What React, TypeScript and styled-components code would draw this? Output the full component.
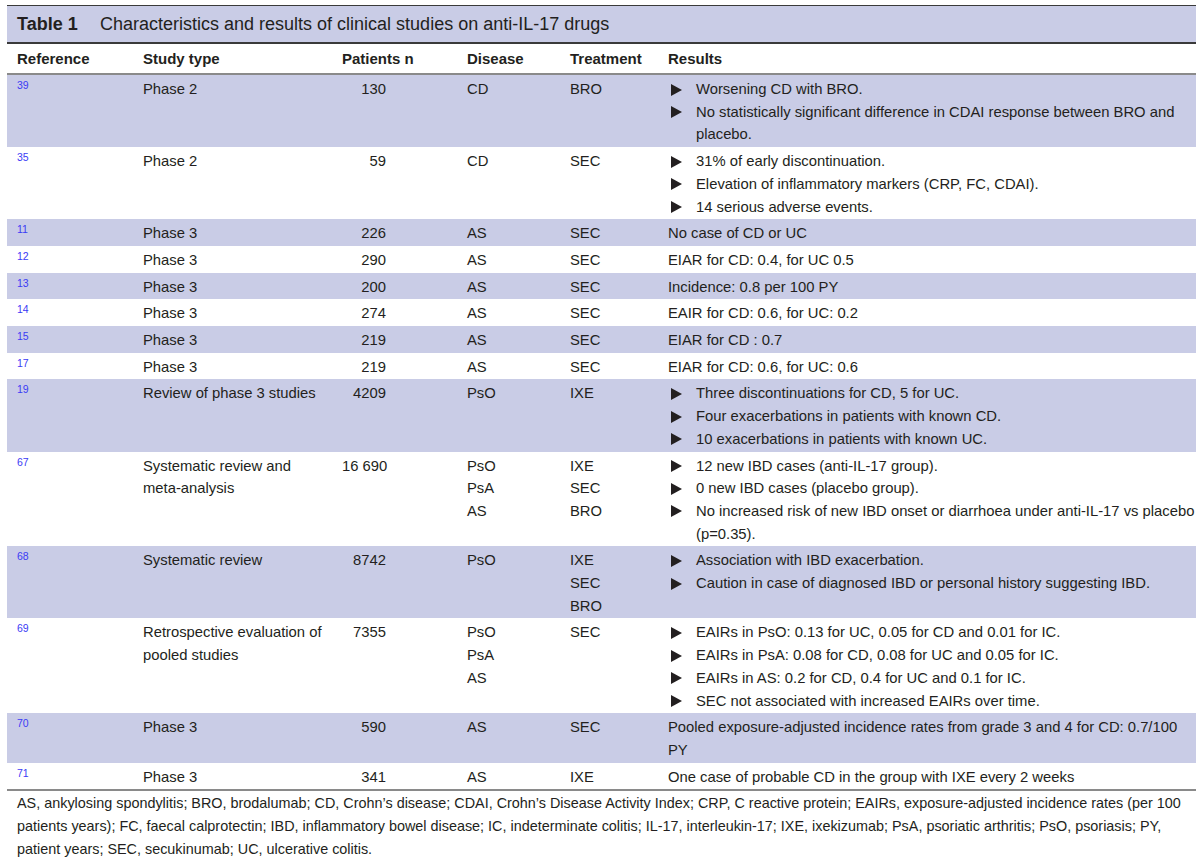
import React from "react";
import styled, { createGlobalStyle } from "styled-components";

const Global = createGlobalStyle`
  body {
    margin: 0;
    background: #ffffff;
    font-family: "Liberation Sans", Arial, sans-serif;
    color: #231f20;
  }
`;

type Results = { bullets?: string[]; text?: string };

type Row = {
  ref: string;
  study: string;
  n: string;
  disease: string[];
  treatment: string[];
  results: Results;
  shaded?: boolean;
};

const rows: Row[] = [
  {
    ref: "39", study: "Phase 2", n: "130", disease: ["CD"], treatment: ["BRO"], shaded: true,
    results: { bullets: ["Worsening CD with BRO.", "No statistically significant difference in CDAI response between BRO and placebo."] },
  },
  {
    ref: "35", study: "Phase 2", n: "59", disease: ["CD"], treatment: ["SEC"],
    results: { bullets: ["31% of early discontinuation.", "Elevation of inflammatory markers (CRP, FC, CDAI).", "14 serious adverse events."] },
  },
  { ref: "11", study: "Phase 3", n: "226", disease: ["AS"], treatment: ["SEC"], shaded: true, results: { text: "No case of CD or UC" } },
  { ref: "12", study: "Phase 3", n: "290", disease: ["AS"], treatment: ["SEC"], results: { text: "EIAR for CD: 0.4, for UC 0.5" } },
  { ref: "13", study: "Phase 3", n: "200", disease: ["AS"], treatment: ["SEC"], shaded: true, results: { text: "Incidence: 0.8 per 100 PY" } },
  { ref: "14", study: "Phase 3", n: "274", disease: ["AS"], treatment: ["SEC"], results: { text: "EAIR for CD: 0.6, for UC: 0.2" } },
  { ref: "15", study: "Phase 3", n: "219", disease: ["AS"], treatment: ["SEC"], shaded: true, results: { text: "EIAR for CD : 0.7" } },
  { ref: "17", study: "Phase 3", n: "219", disease: ["AS"], treatment: ["SEC"], results: { text: "EIAR for CD: 0.6, for UC: 0.6" } },
  {
    ref: "19", study: "Review of phase 3 studies", n: "4209", disease: ["PsO"], treatment: ["IXE"], shaded: true,
    results: { bullets: ["Three discontinuations for CD, 5 for UC.", "Four exacerbations in patients with known CD.", "10 exacerbations in patients with known UC."] },
  },
  {
    ref: "67", study: "Systematic review and meta-analysis", n: "16 690", disease: ["PsO", "PsA", "AS"], treatment: ["IXE", "SEC", "BRO"],
    results: { bullets: ["12 new IBD cases (anti-IL-17 group).", "0 new IBD cases (placebo group).", "No increased risk of new IBD onset or diarrhoea under anti-IL-17 vs placebo (p=0.35)."] },
  },
  {
    ref: "68", study: "Systematic review", n: "8742", disease: ["PsO"], treatment: ["IXE", "SEC", "BRO"], shaded: true,
    results: { bullets: ["Association with IBD exacerbation.", "Caution in case of diagnosed IBD or personal history suggesting IBD."] },
  },
  {
    ref: "69", study: "Retrospective evaluation of pooled studies", n: "7355", disease: ["PsO", "PsA", "AS"], treatment: ["SEC"],
    results: {
      bullets: [
        "EAIRs in PsO: 0.13 for UC, 0.05 for CD and 0.01 for IC.",
        "EAIRs in PsA: 0.08 for CD, 0.08 for UC and 0.05 for IC.",
        "EAIRs in AS: 0.2 for CD, 0.4 for UC and 0.1 for IC.",
        "SEC not associated with increased EAIRs over time.",
      ],
    },
  },
  {
    ref: "70", study: "Phase 3", n: "590", disease: ["AS"], treatment: ["SEC"], shaded: true,
    results: { text: "Pooled exposure-adjusted incidence rates from grade 3 and 4 for CD: 0.7/100 PY" },
  },
  { ref: "71", study: "Phase 3", n: "341", disease: ["AS"], treatment: ["IXE"], results: { text: "One case of probable CD in the group with IXE every 2 weeks" } },
];

const footnote =
  "AS, ankylosing spondylitis; BRO, brodalumab; CD, Crohn\u2019s disease; CDAI, Crohn\u2019s Disease Activity Index; CRP, C reactive protein; EAIRs, exposure-adjusted incidence rates (per 100 patients years); FC, faecal calprotectin; IBD, inflammatory bowel disease; IC, indeterminate colitis; IL-17, interleukin-17; IXE, ixekizumab; PsA, psoriatic arthritis; PsO, psoriasis; PY, patient years; SEC, secukinumab; UC, ulcerative colitis.";

const App = () => {
  return (
    <Page>
      <Global />
      <Table>
        <Title>
          <TitleLabel>Table 1</TitleLabel>
          <span>Characteristics and results of clinical studies on anti-IL-17 drugs</span>
        </Title>
        <HeadRow>
          <HeadCell first>Reference</HeadCell>
          <HeadCell>Study type</HeadCell>
          <HeadCell>Patients n</HeadCell>
          <HeadCell>Disease</HeadCell>
          <HeadCell>Treatment</HeadCell>
          <HeadCell>Results</HeadCell>
        </HeadRow>
        {rows.map((r) => (
          <BodyRow key={r.ref} shaded={r.shaded}>
            <RefCell>{r.ref}</RefCell>
            <Cell>{r.study}</Cell>
            <Cell><Num>{r.n}</Num></Cell>
            <Cell>{r.disease.map((d) => <span key={d}>{d}</span>)}</Cell>
            <Cell>{r.treatment.map((t) => <span key={t}>{t}</span>)}</Cell>
            <ResultCell>
              {r.results.text && <span>{r.results.text}</span>}
              {r.results.bullets && r.results.bullets.map((b) => (
                <Bullet key={b}>
                  <Arrow />
                  <span>{b}</span>
                </Bullet>
              ))}
            </ResultCell>
          </BodyRow>
        ))}
      </Table>
      <Footnote>{footnote}</Footnote>
    </Page>
  );
};

export default App;

const Page = styled.div`
  width: 1200px;
  padding: 5px 4px 0 7px;
  box-sizing: border-box;
`;

const Table = styled.div`
  width: 1189px;
  display: flex;
  flex-direction: column;
  border-bottom: 2px solid #8a8a8a;
`;

const Title = styled.div`
  height: 39px;
  box-sizing: border-box;
  background: #c9cce6;
  border-top: 1.5px solid #3a3a3a;
  border-bottom: 2px solid #3a3a3a;
  display: flex;
  align-items: center;
  padding: 1px 0 0 10px;
  font-size: 18px;
`;

const TitleLabel = styled.span`
  font-weight: bold;
  width: 83px;
`;

const grid = `
  display: grid;
  grid-template-columns: 136px 199px 125px 103px 98px 1fr;
`;

const HeadRow = styled.div`
  ${grid};
  height: 31px;
  box-sizing: border-box;
  align-items: center;
  border-bottom: 2px solid #8a8a8a;
  font-weight: bold;
  font-size: 15px;
`;

const HeadCell = styled.div<{ first?: boolean }>`
  padding-left: ${(p) => (p.first ? "10px" : "0")};
`;

const BodyRow = styled.div<{ shaded?: boolean }>`
  ${grid};
  background: ${(p) => (p.shaded ? "#c9cce6" : "#ffffff")};
  padding: 3px 0 1px;
  font-size: 14.8px;
  line-height: 22.7px;
`;

const RefCell = styled.div`
  padding-left: 10px;
  font-size: 10.5px;
  line-height: 14px;
  color: #3b3bf5;
`;

const Cell = styled.div`
  display: flex;
  flex-direction: column;
  padding-right: 12px;
`;

const ResultCell = styled.div`
  display: flex;
  flex-direction: column;
`;

const Num = styled.span`
  width: 44px;
  text-align: right;
  white-space: nowrap;
`;

const Bullet = styled.div`
  display: flex;
  align-items: flex-start;
  padding-left: 3px;
`;

const Arrow = styled.span`
  flex: none;
  width: 0;
  height: 0;
  margin-top: 5.5px;
  margin-right: 14px;
  border-left: 11px solid #231f20;
  border-top: 6px solid transparent;
  border-bottom: 6px solid transparent;
`;

const Footnote = styled.p`
  margin: 0;
  width: 1180px;
  padding: 1px 0 0 10px;
  font-size: 14.4px;
  line-height: 22.6px;
`;
